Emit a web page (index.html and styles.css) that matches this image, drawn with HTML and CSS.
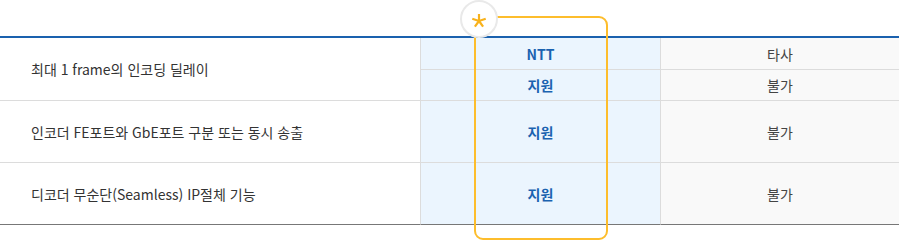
FILE: index.html
```html
<!DOCTYPE html>
<html lang="ko">
<head>
<meta charset="utf-8">
<link rel="stylesheet" href="styles.css">
</head>
<body>
<div class="wrap">
  <div class="grid">
    <div class="cell label span2">최대 1 frame의 인코딩 딜레이</div>
    <div class="cell ntt sub">NTT</div>
    <div class="cell other sub">타사</div>
    <div class="cell ntt sub2">지원</div>
    <div class="cell other sub2">불가</div>

    <div class="cell label row">인코더 FE포트와 GbE포트 구분 또는 동시 송출</div>
    <div class="cell ntt row">지원</div>
    <div class="cell other row">불가</div>

    <div class="cell label row last">디코더 무순단(Seamless) IP절체 기능</div>
    <div class="cell ntt row last">지원</div>
    <div class="cell other row last">불가</div>
  </div>
  <div class="highlight"></div>
  <div class="badge">
    <svg width="16" height="16" viewBox="-8 -8 16 16" aria-hidden="true">
      <g stroke="#f8b21c" stroke-width="2.2" stroke-linecap="butt">
        <line x1="0" y1="0" x2="0" y2="-7"/>
        <line x1="0" y1="0" x2="6.7" y2="-2.2"/>
        <line x1="0" y1="0" x2="4.1" y2="5.7"/>
        <line x1="0" y1="0" x2="-4.1" y2="5.7"/>
        <line x1="0" y1="0" x2="-6.7" y2="-2.2"/>
      </g>
    </svg>
  </div>
</div>
</body>
</html>
```
FILE: styles.css
```css
html, body {
  margin: 0;
  padding: 0;
  background: #fff;
}
body {
  font-family: "Noto Sans CJK KR", "Noto Sans", sans-serif;
  font-size: 14px;
  color: #333;
}
.wrap {
  position: relative;
  width: 899px;
  height: 241px;
  padding-top: 36px;
  box-sizing: border-box;
}
.grid {
  display: grid;
  grid-template-columns: 421px 240px 238px;
  grid-template-rows: 32px 31px 62px 62px;
  border-top: 2px solid #1a61ae;
}
.cell {
  display: flex;
  align-items: center;
  box-sizing: border-box;
  border-bottom: 1px solid #dcdcdc;
}
.label {
  padding-left: 31px;
  border-right: 1px solid #dcdcdc;
  color: #333;
}
.span2 {
  grid-row: span 2;
}
.ntt {
  justify-content: center;
  background: #ebf5fe;
  color: #1a62b0;
  font-weight: bold;
  border-right: 1px solid #dcdcdc;
}
.other {
  justify-content: center;
  background: #f9f9f9;
  color: #444;
}
.last {
  border-bottom: 1px solid #777;
}
.highlight {
  position: absolute;
  left: 474px;
  top: 16px;
  width: 134px;
  height: 224px;
  box-sizing: border-box;
  border: 2px solid #fdbd2c;
  border-radius: 9px;
}
.badge {
  position: absolute;
  left: 460px;
  top: 0;
  width: 38px;
  height: 38px;
  box-sizing: border-box;
  border-radius: 50%;
  background: #fff;
  border: 2px solid #e9e9e9;
  display: flex;
  align-items: center;
  justify-content: center;
  padding-top: 4px;
}
```
